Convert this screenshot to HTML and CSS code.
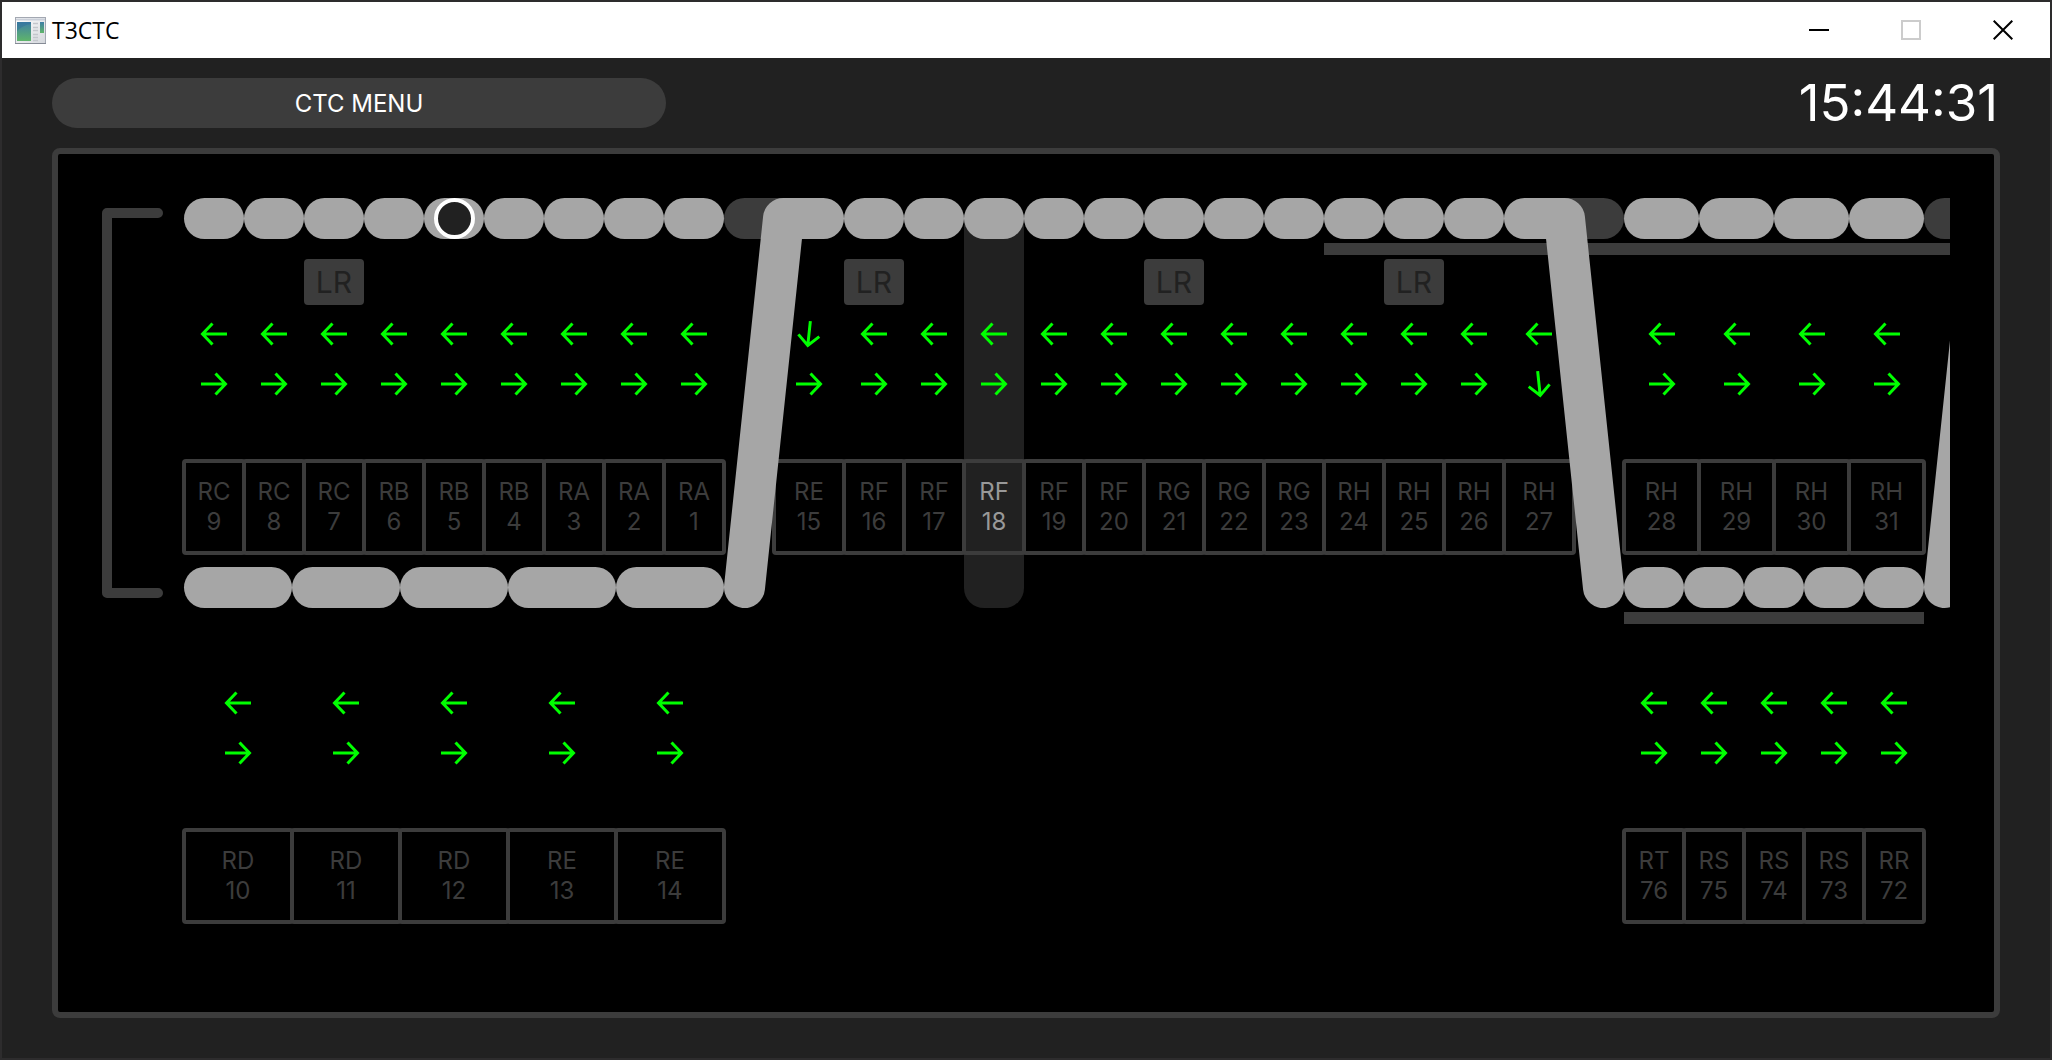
FILE: index.html
```html
<!DOCTYPE html>
<html lang="en">
<head>
<meta charset="utf-8">
<title>T3CTC</title>
<link rel="stylesheet" href="styles.css">
</head>
<body>
<svg class="defs" aria-hidden="true">
  <symbol id="left" viewBox="0 0 28 28"><path d="M27 14H3M12.500 3.500 2.500 14 12.500 24.500" fill="none" stroke="#0f0" stroke-width="3"/></symbol>
  <symbol id="right" viewBox="0 0 28 28"><path d="M1 14H25M15.500 3.500 25.500 14 15.500 24.500" fill="none" stroke="#0f0" stroke-width="3"/></symbol>
</svg>
<div class="window">
  <header class="titlebar">
    <svg class="app-icon" viewBox="0 0 31 27" aria-hidden="true">
      <defs>
        <linearGradient id="pane" x1="0" y1="0" x2="0" y2="1"><stop offset="0" stop-color="#3f7fa6"/><stop offset="1" stop-color="#5fb56a"/></linearGradient>
        <linearGradient id="frame" x1="0" y1="0" x2="1" y2="1"><stop offset="0" stop-color="#fff"/><stop offset="1" stop-color="#d4d7dc"/></linearGradient>
      </defs>
      <rect x=".5" y=".5" width="30" height="26" fill="url(#frame)" stroke="#a3a8b2"/>
      <path d="M1 2.500H30" stroke="#c9ced8" stroke-width="2"/>
      <path d="M0 26.500H31" stroke="#858b95"/>
      <rect x="2" y="5" width="14" height="19" fill="url(#pane)"/>
      <path d="M2 14Q8 8 16 7V5H2Z" fill="#2f6f9c" opacity=".5"/>
      <path d="M18 6.500h5M18 10.500h5M18 13.500h5M18 17.500h5M18 20.500h5M18 23.500h5" stroke="#c3c6cc" stroke-width="1.500"/>
      <rect x="25" y="5" width="4" height="11" fill="url(#pane)"/>
    </svg>
    <h1 class="title">T3CTC</h1>
    <div class="controls">
      <button class="control" aria-label="Minimize"><svg viewBox="0 0 20 20"><path d="M0 10H20" stroke="#000" stroke-width="2"/></svg></button>
      <button class="control" aria-label="Maximize" disabled><svg viewBox="0 0 20 20"><rect x="1" y="1" width="18" height="18" fill="none" stroke="#ccc" stroke-width="2"/></svg></button>
      <button class="control" aria-label="Close"><svg viewBox="0 0 20 20"><path d="M.7.7 19.300 19.300M19.300.7.7 19.300" stroke="#000" stroke-width="2"/></svg></button>
    </div>
  </header>

  <div class="toolbar">
    <button class="menu">CTC MENU</button>
    <time class="clock">15:44:31</time>
  </div>

  <main class="panel">
    <div class="viewport">
      <div class="map">
        <svg class="layer under" width="2000" height="430" aria-hidden="true">
          <path d="M862 20H922V390A20 20 0 0 1 902 410H882A20 20 0 0 1 862 390Z" fill="#212121"/>
          <path d="M56 15H5V395H56" fill="none" stroke="#3c3c3c" stroke-width="10" stroke-linecap="round" stroke-linejoin="round"/>
          <g fill="#3c3c3c">
            <rect x="622" y="0" width="80" height="41" rx="20.500"/>
            <rect x="1442" y="0" width="80" height="41" rx="20.500"/>
            <rect x="1822" y="0" width="80" height="41" rx="20.500"/>
            <rect x="1222" y="45" width="780" height="12"/>
            <rect x="1522" y="414" width="300" height="12"/>
          </g>
        </svg>

        <div class="row">
          <div class="section w60">
            <div class="block"><span class="track"></span><svg class="west"><use href="#left"/></svg><svg class="east"><use href="#right"/></svg><button class="tile">RC<br>9</button></div>
            <div class="block"><span class="track"></span><svg class="west"><use href="#left"/></svg><svg class="east"><use href="#right"/></svg><button class="tile">RC<br>8</button></div>
            <div class="block"><span class="track"></span><button class="lr">LR</button><svg class="west"><use href="#left"/></svg><svg class="east"><use href="#right"/></svg><button class="tile">RC<br>7</button></div>
            <div class="block"><span class="track"></span><svg class="west"><use href="#left"/></svg><svg class="east"><use href="#right"/></svg><button class="tile">RB<br>6</button></div>
            <div class="block"><span class="track"><span class="train"></span></span><svg class="west"><use href="#left"/></svg><svg class="east"><use href="#right"/></svg><button class="tile">RB<br>5</button></div>
            <div class="block"><span class="track"></span><svg class="west"><use href="#left"/></svg><svg class="east"><use href="#right"/></svg><button class="tile">RB<br>4</button></div>
            <div class="block"><span class="track"></span><svg class="west"><use href="#left"/></svg><svg class="east"><use href="#right"/></svg><button class="tile">RA<br>3</button></div>
            <div class="block"><span class="track"></span><svg class="west"><use href="#left"/></svg><svg class="east"><use href="#right"/></svg><button class="tile">RA<br>2</button></div>
            <div class="block"><span class="track"></span><svg class="west"><use href="#left"/></svg><svg class="east"><use href="#right"/></svg><button class="tile">RA<br>1</button></div>
          </div>
          <div class="section w60">
            <div class="block switch"><svg class="west turn-left"><use href="#left"/></svg><svg class="east"><use href="#right"/></svg><button class="tile">RE<br>15</button></div>
            <div class="block"><span class="track"></span><button class="lr">LR</button><svg class="west"><use href="#left"/></svg><svg class="east"><use href="#right"/></svg><button class="tile">RF<br>16</button></div>
            <div class="block"><span class="track"></span><svg class="west"><use href="#left"/></svg><svg class="east"><use href="#right"/></svg><button class="tile">RF<br>17</button></div>
            <div class="block"><span class="track"></span><svg class="west"><use href="#left"/></svg><svg class="east"><use href="#right"/></svg><button class="tile selected">RF<br>18</button></div>
            <div class="block"><span class="track"></span><svg class="west"><use href="#left"/></svg><svg class="east"><use href="#right"/></svg><button class="tile">RF<br>19</button></div>
            <div class="block"><span class="track"></span><svg class="west"><use href="#left"/></svg><svg class="east"><use href="#right"/></svg><button class="tile">RF<br>20</button></div>
            <div class="block"><span class="track"></span><button class="lr">LR</button><svg class="west"><use href="#left"/></svg><svg class="east"><use href="#right"/></svg><button class="tile">RG<br>21</button></div>
            <div class="block"><span class="track"></span><svg class="west"><use href="#left"/></svg><svg class="east"><use href="#right"/></svg><button class="tile">RG<br>22</button></div>
            <div class="block"><span class="track"></span><svg class="west"><use href="#left"/></svg><svg class="east"><use href="#right"/></svg><button class="tile">RG<br>23</button></div>
            <div class="block"><span class="track"></span><svg class="west"><use href="#left"/></svg><svg class="east"><use href="#right"/></svg><button class="tile">RH<br>24</button></div>
            <div class="block"><span class="track"></span><button class="lr">LR</button><svg class="west"><use href="#left"/></svg><svg class="east"><use href="#right"/></svg><button class="tile">RH<br>25</button></div>
            <div class="block"><span class="track"></span><svg class="west"><use href="#left"/></svg><svg class="east"><use href="#right"/></svg><button class="tile">RH<br>26</button></div>
            <div class="block switch"><svg class="west"><use href="#left"/></svg><svg class="east turn-right"><use href="#right"/></svg><button class="tile">RH<br>27</button></div>
          </div>
          <div class="section w75">
            <div class="block"><span class="track"></span><svg class="west"><use href="#left"/></svg><svg class="east"><use href="#right"/></svg><button class="tile">RH<br>28</button></div>
            <div class="block"><span class="track"></span><svg class="west"><use href="#left"/></svg><svg class="east"><use href="#right"/></svg><button class="tile">RH<br>29</button></div>
            <div class="block"><span class="track"></span><svg class="west"><use href="#left"/></svg><svg class="east"><use href="#right"/></svg><button class="tile">RH<br>30</button></div>
            <div class="block"><span class="track"></span><svg class="west"><use href="#left"/></svg><svg class="east"><use href="#right"/></svg><button class="tile">RH<br>31</button></div>
          </div>
        </div>

        <div class="row lower">
          <div class="section w108">
            <div class="block"><span class="track"></span><svg class="west"><use href="#left"/></svg><svg class="east"><use href="#right"/></svg><button class="tile">RD<br>10</button></div>
            <div class="block"><span class="track"></span><svg class="west"><use href="#left"/></svg><svg class="east"><use href="#right"/></svg><button class="tile">RD<br>11</button></div>
            <div class="block"><span class="track"></span><svg class="west"><use href="#left"/></svg><svg class="east"><use href="#right"/></svg><button class="tile">RD<br>12</button></div>
            <div class="block"><span class="track"></span><svg class="west"><use href="#left"/></svg><svg class="east"><use href="#right"/></svg><button class="tile">RE<br>13</button></div>
            <div class="block"><span class="track"></span><svg class="west"><use href="#left"/></svg><svg class="east"><use href="#right"/></svg><button class="tile">RE<br>14</button></div>
          </div>
          <div class="section w60">
            <div class="block"><span class="track"></span><svg class="west"><use href="#left"/></svg><svg class="east"><use href="#right"/></svg><button class="tile">RT<br>76</button></div>
            <div class="block"><span class="track"></span><svg class="west"><use href="#left"/></svg><svg class="east"><use href="#right"/></svg><button class="tile">RS<br>75</button></div>
            <div class="block"><span class="track"></span><svg class="west"><use href="#left"/></svg><svg class="east"><use href="#right"/></svg><button class="tile">RS<br>74</button></div>
            <div class="block"><span class="track"></span><svg class="west"><use href="#left"/></svg><svg class="east"><use href="#right"/></svg><button class="tile">RS<br>73</button></div>
            <div class="block"><span class="track"></span><svg class="west"><use href="#left"/></svg><svg class="east"><use href="#right"/></svg><button class="tile">RR<br>72</button></div>
          </div>
        </div>

        <svg class="layer over" width="2000" height="430" aria-hidden="true">
          <g fill="none" stroke="#a6a6a6" stroke-width="41" stroke-linecap="round" stroke-linejoin="round">
            <path d="M642.500 389.500 681.500 20.500H721.500"/>
            <path d="M1422.500 20.500H1462.500L1501.500 389.500"/>
            <path d="M1842.500 389.500 1881.500 20.500H1921.500"/>
          </g>
        </svg>
      </div>
    </div>
  </main>
</div>
</body>
</html>
```
FILE: styles.css
```css
* { box-sizing: border-box; }

body {
  margin: 0;
  padding: 2px;
  min-height: 100vh;
  display: flex;
  background: #2d2c2d;
  color: #fff;
  font-family: Inter, "Liberation Sans", sans-serif;
}

button {
  margin: 0;
  padding: 0;
  border: 0;
  background: none;
  color: inherit;
  font: inherit;
}

.defs { position: absolute; width: 0; height: 0; }

.window {
  flex: 1;
  min-width: 0;
  display: flex;
  flex-direction: column;
  background: #212121;
}

/* Title bar */
.titlebar {
  display: flex;
  align-items: center;
  height: 56px;
  padding: 0 1px 0 13px;
  background: #fff;
  color: #000;
}

.app-icon { width: 31px; height: 27px; }

.title {
  flex: 1;
  margin: 0 0 0 6px;
  font: 400 23px/32px "Open Sans", "Noto Sans", sans-serif;
}

.controls { display: flex; }

.control {
  display: flex;
  align-items: center;
  justify-content: center;
  width: 92px;
  height: 56px;
}

.control svg { width: 20px; height: 20px; }

/* Menu and clock */
.toolbar {
  display: grid;
  grid-template-columns: repeat(3, 1fr);
  column-gap: 53px;
  align-items: center;
  padding: 20px 50px;
}

.menu {
  height: 50px;
  border-radius: 25px;
  background: #3c3c3c;
  font-size: 24px;
}

.clock {
  grid-column: 3;
  justify-self: end;
  padding-right: 2px;
  font-size: 51px;
  line-height: 50px;
}

/* Track map */
.panel {
  flex: 1;
  margin: 0 50px 40px;
  padding: 44px;
  border: 6px solid #3c3c3c;
  border-radius: 8px;
  background: #000;
}

.viewport { height: 100%; overflow: hidden; }

.map { position: relative; width: max-content; }

.layer { position: absolute; left: 0; top: 0; }
.over { pointer-events: none; }

.row {
  position: relative;
  display: flex;
  gap: 50px;
  padding-left: 82px;
}

.lower { gap: 900px; }

.section { display: grid; grid-auto-flow: column; }
.w60 .block { width: 60px; }
.w75 .block { width: 75px; }
.w108 .block { width: 108px; }
.section .switch { width: 70px; }

.block {
  display: grid;
  grid-template-rows: 41px 20px 46px 15px 28px 22px 28px 61px 96px 12px;
  justify-items: center;
}

.track {
  grid-row: 1;
  width: 100%;
  display: flex;
  justify-content: center;
  border-radius: 21px;
  background: #a6a6a6;
}

.train {
  width: 41px;
  border: 4px solid #fff;
  border-radius: 50%;
  background: #212121;
}

.lr {
  grid-row: 3;
  width: 60px;
  border-radius: 4px;
  background: #3c3c3c;
  color: #212121;
  font-size: 30px;
}

.west, .east { width: 28px; height: 28px; }
.west { grid-row: 5; }
.east { grid-row: 7; }
.turn-left { transform: rotate(-84deg); }
.turn-right { transform: rotate(84deg); }

.tile {
  grid-row: 9;
  width: calc(100% + 4px);
  border: 4px solid #3c3c3c;
  border-radius: 4px;
  color: #3c3c3c;
  font-size: 24px;
  line-height: 30px;
}

.selected { color: #999; }
```
